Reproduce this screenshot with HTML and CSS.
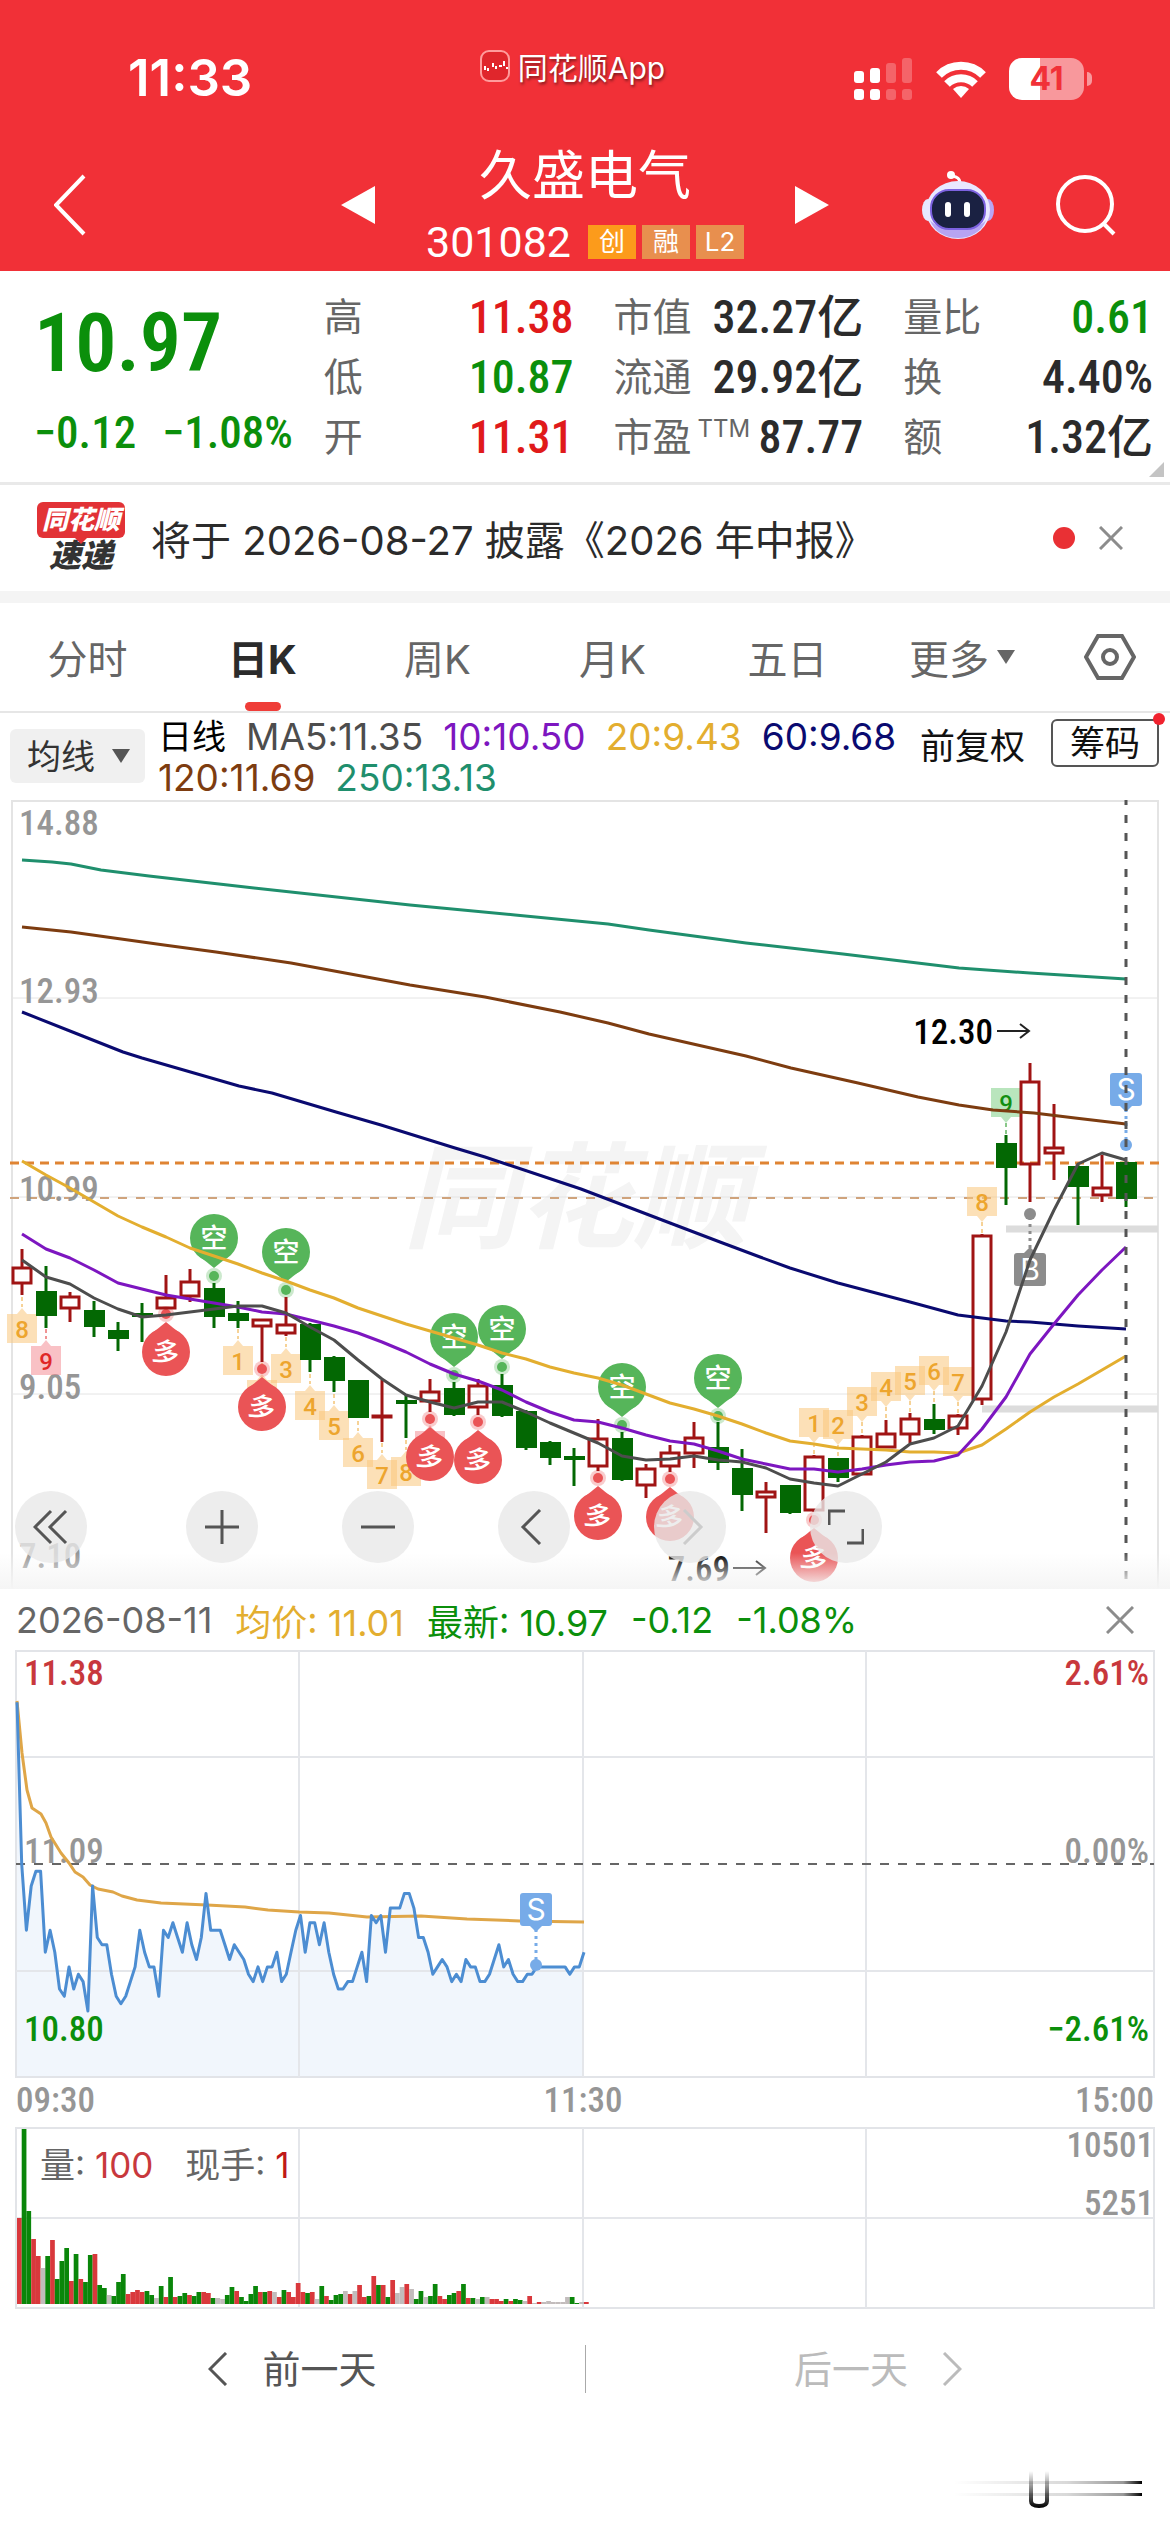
FILE: index.html
```
<!DOCTYPE html>
<html lang="zh-CN">
<head>
  <meta charset="UTF-8">
  <meta name="viewport" content="width=device-width, initial-scale=1.0">
  <title>久盛电气 301082</title>
  <link rel="stylesheet" href="styles.css">
</head>
<body>
  <header class="header">
    <div class="status-bar">
      <div class="time">11:33</div>
      <div class="app-name">
        <svg width="32" height="34" viewBox="0 0 32 34">
          <rect x="2" y="2" width="28" height="30" rx="8" fill="#e0262c" stroke="#ff9c9c" stroke-width="2"/>
          <path d="M6 21v-4M9 22v-3M14 18v-4M17 20v-3M20 17h3M25 17v-5M27 19h2" stroke="#fff" stroke-width="2" fill="none"/>
        </svg>
        <span>同花顺App</span>
      </div>
      <div class="status-icons">
        <svg width="59" height="42" viewBox="0 0 59 42" fill="#fff">
          <rect x="0" y="13" width="10" height="12" rx="3"/>
          <rect x="16" y="10" width="10" height="15" rx="3"/>
          <rect x="32" y="5" width="10" height="20" rx="3" opacity=".25"/>
          <rect x="48" y="0" width="10" height="25" rx="3" opacity=".25"/>
          <rect x="0" y="31" width="10" height="11" rx="3"/>
          <rect x="16" y="31" width="10" height="11" rx="3"/>
          <rect x="32" y="31" width="10" height="11" rx="3" opacity=".25"/>
          <rect x="48" y="31" width="10" height="11" rx="3" opacity=".25"/>
        </svg>
        <svg width="50" height="38" viewBox="0 0 50 38" fill="none" stroke="#fff" stroke-width="8">
          <path d="M3 15a31 31 0 0 1 44 0"/>
          <path d="M11 24a20 20 0 0 1 28 0"/>
          <path d="M25 38l-8-9a12 12 0 0 1 16 0z" fill="#fff" stroke="none"/>
        </svg>
        <div class="battery"><span>41</span></div>
      </div>
    </div>
    <nav class="title-bar">
      <button class="icon-btn" aria-label="返回">
        <svg width="32" height="62" viewBox="0 0 32 62" fill="none" stroke="#fff" stroke-width="4"><path d="M30 2L2 31l28 29"/></svg>
      </button>
      <div class="title-center">
        <button class="icon-btn" aria-label="上一只">
          <svg width="34" height="38" viewBox="0 0 34 38"><path d="M34 0v38L0 19z" fill="#fff"/></svg>
        </button>
        <div class="stock">
          <h1 class="stock-name">久盛电气</h1>
          <div class="stock-code">
            <span>301082</span>
            <span class="tags"><i class="tag tag-main">创</i><i class="tag">融</i><i class="tag">L2</i></span>
          </div>
        </div>
        <button class="icon-btn" aria-label="下一只">
          <svg width="34" height="38" viewBox="0 0 34 38"><path d="M0 0v38l34-19z" fill="#fff"/></svg>
        </button>
      </div>
      <div class="title-tools">
        <button class="icon-btn" aria-label="助手">
          <svg width="72" height="70" viewBox="0 0 72 70">
            <path d="M38 14c0-6-3-7-8-8" stroke="#fff" stroke-width="3" fill="none"/>
            <circle cx="29" cy="5" r="4" fill="#fff"/>
            <ellipse cx="6" cy="40" rx="6" ry="11" fill="#e6e9ff"/>
            <ellipse cx="66" cy="40" rx="6" ry="11" fill="#b9a6f5"/>
            <ellipse cx="36" cy="40" rx="32" ry="29" fill="#e9e8ff"/>
            <path d="M8 50c8 24 48 24 56 0-8 12-48 12-56 0z" fill="#b7a4f2"/>
            <rect x="9" y="20" width="54" height="39" rx="18" fill="#1a2142" stroke="#7c62e0" stroke-width="2"/>
            <rect x="23" y="32" width="6" height="15" rx="3" fill="#fff"/>
            <rect x="42" y="32" width="6" height="15" rx="3" fill="#fff"/>
          </svg>
        </button>
        <button class="icon-btn" aria-label="搜索">
          <svg width="60" height="62" viewBox="0 0 60 62" fill="none" stroke="#fff" stroke-width="4"><circle cx="29" cy="30" r="27"/><path d="M48 50l10 10"/></svg>
        </button>
      </div>
    </nav>
  </header>

  <section class="quote">
    <div class="price-box">
      <div class="price">10.97</div>
      <div class="change"><span>−0.12</span><span>−1.08%</span></div>
    </div>
    <div class="stats">
      <div class="stat"><span>高</span><b class="up">11.38</b></div>
      <div class="stat"><span>低</span><b class="down">10.87</b></div>
      <div class="stat"><span>开</span><b class="up">11.31</b></div>
    </div>
    <div class="stats">
      <div class="stat"><span>市值</span><b>32.27亿</b></div>
      <div class="stat"><span>流通</span><b>29.92亿</b></div>
      <div class="stat"><span>市盈<sup>TTM</sup></span><b>87.77</b></div>
    </div>
    <div class="stats">
      <div class="stat"><span>量比</span><b class="down">0.61</b></div>
      <div class="stat"><span>换</span><b>4.40%</b></div>
      <div class="stat"><span>额</span><b>1.32亿</b></div>
    </div>
  </section>

  <section class="news">
    <div class="news-logo">
      <span class="logo-top">同花顺</span>
      <span class="logo-bottom">速递</span>
    </div>
    <a class="news-text" href="#">将于 2026-08-27 披露《2026 年中报》</a>
    <span class="dot"></span>
    <button class="icon-btn" aria-label="关闭">
      <svg width="24" height="24" viewBox="0 0 24 24" stroke="#8c8c8c" stroke-width="3"><path d="M1 1l22 22M23 1L1 23"/></svg>
    </button>
  </section>

  <nav class="tabs">
    <button class="tab">分时</button>
    <button class="tab active">日K</button>
    <button class="tab">周K</button>
    <button class="tab">月K</button>
    <button class="tab">五日</button>
    <button class="tab">更多<svg width="20" height="14" viewBox="0 0 20 14"><path d="M1 0h18l-9 14z" fill="#666"/></svg></button>
    <button class="tab" aria-label="设置">
      <svg width="52" height="46" viewBox="0 0 52 46" fill="none" stroke="#666" stroke-width="4"><path d="M14 2h24l12 21-12 21H14L2 23z"/><circle cx="26" cy="23" r="7"/></svg>
    </button>
  </nav>

  <section class="ma-bar">
    <div class="select-box">
      <select class="ma-select" aria-label="指标"><option>均线</option></select>
      <svg width="20" height="14" viewBox="0 0 20 14"><path d="M1 0h18l-9 14z" fill="#555"/></svg>
    </div>
    <div class="ma-list">
      <span class="ma-name">日线</span>
      <span class="ma5">MA5:11.35</span>
      <span class="ma10">10:10.50</span>
      <span class="ma20">20:9.43</span>
      <span class="ma60">60:9.68</span>
      <span class="ma120">120:11.69</span>
      <span class="ma250">250:13.13</span>
    </div>
    <div class="ma-right">
      <span>前复权</span>
      <button class="chip-btn">筹码<i class="chip-dot"></i></button>
    </div>
  </section>

  <section class="kline">
    <svg id="kline" class="chart" viewBox="0 800 1170 789"></svg>
    <div class="kline-fade"></div>
    <div class="kline-tools">
      <button class="round-btn" aria-label="最早"><svg viewBox="0 0 36 36"><path d="M18 2L2 18l16 16M33 2L17 18l16 16"/></svg></button>
      <button class="round-btn" aria-label="放大"><svg viewBox="0 0 36 36"><path d="M18 1v34M1 18h34"/></svg></button>
      <button class="round-btn" aria-label="缩小"><svg viewBox="0 0 36 36"><path d="M1 18h34"/></svg></button>
      <button class="round-btn" aria-label="左移"><svg viewBox="0 0 36 36"><path d="M24 1L7 18l17 17"/></svg></button>
      <button class="round-btn" aria-label="右移" disabled><svg viewBox="0 0 36 36"><path d="M12 1l17 17-17 17"/></svg></button>
      <button class="round-btn" aria-label="全屏"><svg viewBox="0 0 36 36"><path d="M1 16V2h16M35 20v14H19"/></svg></button>
    </div>
  </section>

  <section class="intraday">
    <div class="intraday-head">
      <span class="date">2026-08-11</span>
      <span class="ma20">均价: 11.01</span>
      <span class="down">最新: 10.97</span>
      <span class="down">-0.12</span>
      <span class="down">-1.08%</span>
      <button class="icon-btn close" aria-label="关闭">
        <svg width="28" height="28" viewBox="0 0 28 28" stroke="#8c8c8c" stroke-width="3"><path d="M1 1l26 26M27 1L1 27"/></svg>
      </button>
    </div>
    <svg id="intraday" class="chart" viewBox="0 1650 1170 665"></svg>
  </section>

  <nav class="day-nav">
    <button class="day-btn">
      <svg width="20" height="34" viewBox="0 0 20 34" fill="none" stroke="#555" stroke-width="3"><path d="M18 1L2 17l16 16"/></svg>
      前一天
    </button>
    <button class="day-btn" disabled>
      后一天
      <svg width="20" height="34" viewBox="0 0 20 34" fill="none" stroke="#bbb" stroke-width="3"><path d="M2 1l16 16L2 33"/></svg>
    </button>
  </nav>

  <footer class="footer">
    <svg width="190" height="44" viewBox="0 0 190 44">
      <defs>
        <linearGradient id="fadeX"><stop offset="0" stop-color="#000" stop-opacity="0"/><stop offset=".6" stop-color="#000" stop-opacity=".15"/><stop offset=".9" stop-color="#000" stop-opacity=".4"/><stop offset="1" stop-color="#000"/></linearGradient>
        <linearGradient id="fadeY" x2="0" y2="1"><stop offset="0" stop-color="#000" stop-opacity="0"/><stop offset="1" stop-color="#000"/></linearGradient>
      </defs>
      <rect x="0" y="12" width="188" height="3" fill="url(#fadeX)"/>
      <rect x="0" y="24" width="188" height="3" fill="url(#fadeX)"/>
      <path d="M75 2v30q0 7 10 7t10-7V2h-4v30q0 3-6 3t-6-3V2z" fill="url(#fadeY)"/>
    </svg>
  </footer>

  <script src="main.js"></script>
</body>
</html>
```
FILE: styles.css
```
:root {
  --red: #e01a1a;
  --green: #0b8f0b;
  --num: "Roboto Condensed", Roboto, "Noto Sans CJK SC", sans-serif;
}
* {
  box-sizing: border-box;
}
body {
  margin: 0;
  background: #fff;
  color: #333;
  font-family: Inter, "Noto Sans CJK SC", sans-serif;
}
button, select {
  font: inherit;
  color: inherit;
  border: none;
  background: none;
  padding: 0;
  cursor: pointer;
}
svg {
  display: block;
}
.icon-btn {
  display: block;
}

/* header */
.header {
  background: #f13037;
  color: #fff;
}
.status-bar {
  display: grid;
  grid-template-columns: 1fr auto 1fr;
  height: 144px;
  padding: 0 86px;
}
.time {
  padding: 48px 0 0 42px;
  font-size: 51px;
  font-weight: 600;
  line-height: 60px;
}
.app-name {
  display: flex;
  align-items: center;
  gap: 7px;
  height: 44px;
  margin-top: 44px;
  padding-right: 26px;
  font-size: 30px;
  text-shadow: 1px 2px 3px rgba(0, 0, 0, 0.5);
}
.status-icons {
  display: flex;
  justify-content: flex-end;
  align-items: center;
  gap: 23px;
  height: 42px;
  margin-top: 58px;
}
.battery {
  position: relative;
  width: 75px;
  height: 42px;
  border-radius: 13px;
  background: linear-gradient(90deg, #fff 41%, #f8989c 41%);
  color: #f13037;
  font-size: 32px;
  font-weight: 700;
  line-height: 42px;
  text-align: center;
}
.battery::after {
  content: "";
  position: absolute;
  right: -8px;
  top: 14px;
  width: 5px;
  height: 14px;
  border-radius: 0 5px 5px 0;
  background: #f8989c;
}
.title-bar {
  display: grid;
  grid-template-columns: 1fr auto 1fr;
  align-items: center;
  padding: 4px 54px 9px;
}
.title-center {
  display: flex;
  align-items: center;
  gap: 51px;
}
.stock {
  text-align: center;
}
.stock-name {
  margin: 0 0 18px;
  font-size: 53px;
  font-weight: 400;
  line-height: 56px;
}
.stock-code {
  display: flex;
  align-items: center;
  gap: 17px;
  font-family: Roboto, sans-serif;
  font-size: 43px;
  line-height: 40px;
}
.tags {
  display: flex;
  gap: 6px;
}
.tag {
  width: 48px;
  height: 34px;
  background: #e88f4e;
  font-family: Inter, "Noto Sans CJK SC", sans-serif;
  font-size: 26px;
  font-style: normal;
  line-height: 34px;
}
.tag-main {
  background: #fc9b1b;
}
.title-tools {
  display: flex;
  align-items: center;
  justify-content: flex-end;
  gap: 62px;
}

/* quote */
.quote {
  position: relative;
  display: grid;
  grid-template-columns: repeat(4, minmax(0, 1fr));
  gap: 40px;
  padding: 16px 17px 15px 34px;
  border-bottom: 3px solid #e9e9e9;
  white-space: nowrap;
}
.quote::after {
  content: "";
  position: absolute;
  right: 6px;
  bottom: 5px;
  border-left: 15px solid transparent;
  border-bottom: 15px solid #c4c4c4;
}
.price-box {
  font-family: var(--num);
  color: var(--green);
}
.price {
  font-size: 82px;
  font-weight: 600;
  line-height: 112px;
}
.change {
  display: flex;
  gap: 26px;
  margin-top: 4px;
  font-size: 45px;
  font-weight: 500;
  line-height: 60px;
}
.stat {
  display: flex;
  justify-content: space-between;
  color: #666;
  font-size: 39px;
  line-height: 60px;
  height: 60px;
}
.stat b {
  color: #2b2b2b;
  font-family: var(--num);
  font-size: 46px;
  font-weight: 500;
}
.stat sup {
  margin-left: 6px;
  font-size: 24px;
  line-height: 1px;
}
.up, .stat b.up {
  color: var(--red);
}
.down, .stat b.down {
  color: var(--green);
}

/* news */
.news {
  display: flex;
  align-items: center;
  height: 118px;
  padding: 0 47px 0 37px;
  border-bottom: 12px solid #f4f4f4;
}
.news-logo {
  display: flex;
  flex-direction: column;
  align-items: center;
  width: 88px;
  margin-right: 26px;
  font-style: italic;
  font-weight: 900;
  line-height: 36px;
}
.logo-top {
  position: relative;
  width: 88px;
  border-radius: 6px;
  background: #e23236;
  color: #fff;
  font-size: 26px;
  text-align: center;
}
.logo-top::after {
  content: "";
  position: absolute;
  left: 38px;
  top: 100%;
  border: 6px solid transparent;
  border-top-color: #e23236;
  border-bottom: none;
}
.logo-bottom {
  font-size: 32px;
}
.news-text {
  flex: 1;
  color: #2b2b2b;
  font-size: 40px;
  text-decoration: none;
}
.dot {
  width: 22px;
  height: 22px;
  margin-right: 24px;
  border-radius: 50%;
  background: #e93034;
}

/* tabs */
.tabs {
  display: grid;
  grid-template-columns: repeat(6, 175fr) 120fr;
  height: 110px;
  border-bottom: 2px solid #e6e6e6;
}
.tab {
  position: relative;
  display: flex;
  align-items: center;
  justify-content: center;
  gap: 7px;
  color: #666;
  font-size: 40px;
}
.tab.active {
  color: #2b2b2b;
  font-weight: 700;
}
.tab.active::after {
  content: "";
  position: absolute;
  bottom: 0;
  width: 36px;
  height: 9px;
  border-radius: 5px;
  background: #ef3d38;
}

/* moving averages */
.ma-bar {
  display: flex;
  height: 87px;
  padding: 0 11px 0 10px;
  font-size: 35px;
  white-space: nowrap;
}
.select-box {
  display: flex;
  align-items: center;
  gap: 16px;
  height: 54px;
  margin: 16px 13px 0 0;
  padding: 0 14px 0 17px;
  border-radius: 6px;
  background: #f0f0f0;
  font-size: 34px;
}
.ma-select {
  appearance: none;
}
.ma-list {
  flex: 1;
  display: flex;
  flex-wrap: wrap;
  align-content: flex-start;
  column-gap: 20px;
  padding-top: 3px;
  font-size: 37px;
  line-height: 41px;
}
.ma-name {
  color: #000;
  font-size: 34px;
}
.ma-right {
  display: flex;
  align-items: center;
  gap: 26px;
  height: 48px;
  margin-top: 6px;
  color: #111;
}
.chip-btn {
  position: relative;
  height: 48px;
  padding: 0 17px;
  border: 2px solid #555;
  border-radius: 6px;
  line-height: 42px;
}
.chip-dot {
  position: absolute;
  top: -8px;
  right: -8px;
  width: 12px;
  height: 12px;
  border-radius: 50%;
  background: #f0222e;
}
.ma5 { color: #4d4d4d; }
.ma10 { color: #7d16c0; }
.ma20 { color: #e3ae2f; }
.ma60 { color: #0a0a70; }
.ma120 { color: #7d3c10; }
.ma250 { color: #1f8f6d; }

/* charts */
.chart {
  width: 100%;
  height: auto;
}
.chart text {
  font-family: var(--num);
  font-size: 35px;
}
.chart .sans {
  font-family: Inter, "Noto Sans CJK SC", sans-serif;
}
.chart .axis {
  fill: #969696;
}
.chart .strong {
  font-weight: 500;
}
.chart .watermark {
  fill: #f4f4f4;
  font-family: "Noto Sans CJK SC", sans-serif;
  font-size: 115px;
  font-style: italic;
  font-weight: 700;
}
.chart .badge-text {
  font-family: Roboto, sans-serif;
  font-size: 24px;
  font-weight: 500;
}
.chart .pin-text {
  font-family: "Noto Sans CJK SC", sans-serif;
  font-size: 27px;
  font-weight: 500;
}
.chart .mark-text {
  font-family: Inter, sans-serif;
  font-size: 30px;
}
.kline {
  position: relative;
}
.kline-fade {
  position: absolute;
  left: 0;
  right: 0;
  bottom: 0;
  height: 36px;
  background: linear-gradient(rgba(245, 245, 245, 0), #f5f5f5);
}
.kline-tools {
  position: absolute;
  left: 15px;
  bottom: 26px;
  display: flex;
  gap: 84px;
}
.round-btn {
  width: 72px;
  height: 72px;
  padding: 18px;
  border-radius: 50%;
  background: rgba(232, 232, 232, 0.8);
}
.round-btn:first-child {
  margin-right: 15px;
}
.round-btn svg {
  fill: none;
  stroke: #555;
  stroke-width: 3;
}
.round-btn:disabled svg {
  stroke: #ccc;
}
.intraday-head {
  display: flex;
  align-items: center;
  gap: 23px;
  height: 61px;
  padding: 0 36px 0 16px;
  font-size: 36px;
}
.date {
  color: #666;
}
.close {
  margin-left: auto;
}

/* prev / next day */
.day-nav {
  display: grid;
  grid-template-columns: 1fr 1fr;
  padding: 30px 0 32px;
}
.day-btn {
  display: flex;
  align-items: center;
  justify-content: center;
  gap: 34px;
  height: 48px;
  color: #555;
  font-size: 38px;
  line-height: 48px;
}
.day-btn:disabled {
  border-left: 1px solid #aaa;
  color: #bbb;
}
.footer {
  display: flex;
  justify-content: flex-end;
  padding: 44px 26px 0 0;
}
```
FILE: main.js
```
var NS = 'http://www.w3.org/2000/svg';

function add(parent, tag, attrs, text) {
  var el = document.createElementNS(NS, tag);
  for (var k in attrs) el.setAttribute(k, attrs[k]);
  if (text !== undefined) el.textContent = text;
  parent.appendChild(el);
  return el;
}

function line(svg, x1, y1, x2, y2, color, w, dash) {
  var attrs = { x1: x1, y1: y1, x2: x2, y2: y2, stroke: color, 'stroke-width': w };
  if (dash) attrs['stroke-dasharray'] = dash;
  return add(svg, 'line', attrs);
}

function poly(svg, pts, color, w) {
  add(svg, 'polyline', { points: pts.join(' '), fill: 'none', stroke: color, 'stroke-width': w, 'stroke-linejoin': 'round' });
}

// ---------- daily K line ----------
var k = document.getElementById('kline');
var STEP = 24;
function kx(i) { return 22 + STEP * i; }

// [up, high, bodyTop, bodyBottom, low]
var candles = [
  [1,1249,1267,1284,1295],[0,1266,1291,1316,1328],[1,1292,1296,1309,1322],[0,1301,1310,1327,1337],
  [0,1322,1330,1339,1351],[0,1303,1313,1317,1342],[1,1275,1297,1309,1309],[1,1269,1281,1297,1302],
  [0,1283,1288,1317,1328],[0,1301,1313,1321,1328],[1,1319,1319,1327,1362],[1,1297,1324,1334,1336],
  [0,1323,1324,1360,1372],[0,1356,1357,1381,1392],[0,1380,1380,1418,1418],[1,1380,1415,1417,1442],
  [0,1395,1400,1404,1438],[1,1379,1391,1402,1412],[0,1382,1388,1415,1416],[1,1379,1385,1408,1415],
  [0,1374,1385,1416,1417],[0,1410,1411,1448,1450],[0,1441,1442,1458,1465],[0,1448,1456,1460,1486],
  [1,1419,1438,1467,1471],[0,1432,1438,1480,1481],[1,1464,1468,1486,1498],[1,1445,1452,1467,1472],
  [1,1422,1437,1454,1468],[0,1422,1447,1463,1470],[0,1449,1468,1495,1511],[1,1482,1491,1498,1533],
  [0,1485,1485,1513,1514],[1,1455,1456,1511,1512],[0,1458,1458,1478,1482],[1,1435,1436,1475,1475],
  [1,1420,1433,1448,1448],[1,1413,1418,1435,1443],[0,1404,1419,1430,1434],[1,1414,1415,1429,1435],
  [1,1234,1235,1400,1405],[0,1135,1143,1168,1205],[1,1063,1081,1165,1202],[1,1104,1147,1154,1180],
  [0,1165,1166,1187,1225],[1,1155,1187,1196,1202],[0,1162,1162,1199,1207]
];
var ma5 = [1260,1277,1284,1298,1309,1317,1315,1312,1309,1306,1306,1313,1327,1340,1360,1379,1395,1402,1408,1402,1402,1412,1423,1433,1443,1456,1460,1459,1456,1460,1462,1468,1479,1483,1486,1474,1462,1444,1438,1426,1386,1332,1260,1210,1164,1153,1160];
var ma10 = [1234,1249,1258,1270,1283,1289,1295,1299,1303,1307,1312,1314,1320,1326,1333,1342,1352,1364,1374,1381,1390,1402,1412,1420,1422,1428,1435,1441,1444,1451,1459,1464,1469,1469,1472,1469,1465,1462,1461,1455,1429,1397,1354,1324,1295,1270,1247];
var ma20 = [1161,1175,1188,1202,1216,1227,1237,1248,1256,1264,1273,1281,1290,1298,1308,1316,1324,1331,1338,1345,1353,1359,1367,1373,1378,1385,1394,1403,1409,1416,1424,1433,1441,1444,1448,1449,1450,1452,1452,1453,1445,1429,1412,1397,1384,1370,1356];
var ma60 = ['22,1012','75,1033','123,1052','142,1058','239,1086','272,1093','336,1112','381,1125','455,1148','485,1157','581,1189','670,1223','720,1242','760,1257','790,1268','838,1283','910,1302','958,1315','982,1318','1006,1321','1030,1322','1078,1326','1126,1329'];
var ma120 = ['22,927','71,932','164,945','216,952','291,963','410,985','485,997','560,1012','608,1023','649,1034','746,1056','791,1068','858,1083','918,1097','959,1105','993,1110','1034,1113','1075,1118','1126,1124'];
var ma250 = ['22,860','52,862','71,864','101,870','149,876','254,888','410,905','515,915','608,924','649,930','746,943','843,954','959,968','1030,973','1126,979'];

add(k, 'text', { x: 403, y: 1239, 'class': 'watermark' }, '同花顺');
add(k, 'path', { d: 'M12 1589V801H1158V1589', fill: 'none', stroke: '#e4e4e4', 'stroke-width': 2 });
[998, 1197, 1394].forEach(function (y) { line(k, 12, y, 1158, y, '#e4e4e4', 1); });
line(k, 1006, 1229, 1158, 1229, '#dcdcdc', 7);
line(k, 982, 1409, 1158, 1409, '#dcdcdc', 7);
line(k, 10, 1163, 1160, 1163, '#df8433', 3, '9 6');
line(k, 10, 1198, 1160, 1198, '#cfa37c', 2, '9 9');

[['14.88', 835], ['12.93', 1003], ['10.99', 1201], ['9.05', 1399], ['7.10', 1568]].forEach(function (a) {
  add(k, 'text', { x: 19, y: a[1], 'class': 'axis strong' }, a[0]);
});

// nine-turn badges: [index, top, digit, colour], pointing up at the candle
var O = ['#fac67c', '#eda52e'], R = ['#f48e96', '#e02828'], G = ['#7fcf86', '#128f12'];
function badge(i, top, n, c, below) {
  var x = kx(i), y = top;
  var d = below
    ? 'M' + (x - 15) + ' ' + y + 'h10l5 -6l5 6h10v29h-30z'
    : 'M' + (x - 15) + ' ' + y + 'h30v29h-10l-5 6l-5 -6h-10z';
  add(k, 'path', { d: d, fill: c[0], opacity: 0.55 });
  if (below) line(k, x, y - 17, x, y - 7, c[1], 1, '4 3');
  else line(k, x, y + 35, x, y + 46, c[1], 1, '4 3');
  add(k, 'text', { x: x, y: y + 24, 'text-anchor': 'middle', fill: c[1], 'class': 'badge-text' }, n);
}
[[0,1314,8,O],[1,1346,9,R],[9,1346,1,O],[10,1380,2,O],[11,1354,3,O],[12,1391,4,O],[13,1411,5,O],[14,1438,6,O],[15,1460,7,O],[16,1457,8,O],[17,1431,9,R]]
  .forEach(function (b) { badge(b[0], b[1], b[2], b[3], true); });
[[33,1408,1,O],[34,1410,2,O],[35,1387,3,O],[36,1372,4,O],[37,1366,5,O],[38,1356,6,O],[39,1367,7,O],[40,1187,8,O],[41,1088,9,G]]
  .forEach(function (b) { badge(b[0], b[1], b[2], b[3], false); });

// long / short pins
function pin(i, cy, up) {
  var x = kx(i), c = up ? '#56b55a' : '#ea5456', s = up ? 1 : -1;
  add(k, 'circle', { cx: x, cy: cy, r: 24, fill: c });
  add(k, 'path', { d: 'M' + (x - 16) + ' ' + (cy + 17 * s) + 'L' + x + ' ' + (cy + 30 * s) + 'L' + (x + 16) + ' ' + (cy + 17 * s) + 'z', fill: c });
  add(k, 'circle', { cx: x, cy: cy + 38 * s, r: 8, fill: c, opacity: 0.3 });
  add(k, 'circle', { cx: x, cy: cy + 38 * s, r: 5, fill: c });
  var t = { x: x, y: cy + 10, 'text-anchor': 'middle', fill: '#fff', 'class': 'pin-text' };
  if (!up) t.transform = 'rotate(12 ' + x + ' ' + cy + ')';
  add(k, 'text', t, up ? '空' : '多');
}
[[8,1238],[11,1252],[18,1337],[20,1329],[25,1387],[29,1378]].forEach(function (p) { pin(p[0], p[1], true); });
[[6,1352],[10,1407],[17,1457],[19,1460],[24,1516],[27,1517],[33,1558]].forEach(function (p) { pin(p[0], p[1], false); });

// trade marks
function mark(svg, x, y, letter, c, dotY) {
  var down = dotY > y;
  line(svg, x, down ? y + 36 : y - 5, x, dotY, c, 3, '3 4');
  add(svg, 'rect', { x: x - 16, y: y, width: 32, height: 33, rx: 3, fill: c });
  add(svg, 'path', { d: down ? 'M' + (x - 6) + ' ' + (y + 33) + 'h12l-6 6z' : 'M' + (x - 6) + ' ' + y + 'h12l-6 -6z', fill: c });
  add(svg, 'circle', { cx: x, cy: dotY, r: 6, fill: c });
  add(svg, 'text', { x: x, y: y + 27, 'text-anchor': 'middle', fill: '#fff', 'class': 'mark-text' }, letter);
}
mark(k, kx(42), 1253, 'B', '#8c8c8c', 1214);
mark(k, 1126, 1073, 'S', '#77abe8', 1145);

candles.forEach(function (c, i) {
  var x = kx(i), col = c[0] ? '#a01414' : '#036803';
  if (c[0]) {
    line(k, x, c[1], x, c[2], col, 3);
    line(k, x, c[3], x, c[4], col, 3);
    add(k, 'rect', { x: x - 9, y: c[2] + 1, width: 18, height: Math.max(1, c[3] - c[2] - 2), fill: 'none', stroke: col, 'stroke-width': 3 });
  } else {
    line(k, x, c[1], x, c[4], col, 3);
    add(k, 'rect', { x: x - 10, y: c[2], width: 21, height: c[3] - c[2], fill: col });
  }
});

function byIndex(arr) { return arr.map(function (y, i) { return kx(i) + ',' + y; }); }
poly(k, ma250, '#1f8f6d', 3);
poly(k, ma120, '#7d3c10', 3);
poly(k, ma60, '#0a0a70', 3);
poly(k, byIndex(ma20), '#e3ae2f', 3);
poly(k, byIndex(ma10), '#7d16c0', 3);
poly(k, byIndex(ma5), '#4d4d4d', 3);
line(k, 1126, 797, 1126, 1583, '#555', 3, '8 10');

function arrow(x, y) {
  add(k, 'path', { d: 'M' + x + ' ' + y + 'h32m-9 -7l9 7l-9 7', fill: 'none', stroke: '#222', 'stroke-width': 2 });
}
add(k, 'text', { x: 993, y: 1044, 'text-anchor': 'end', 'class': 'strong' }, '12.30');
arrow(997, 1031);
add(k, 'text', { x: 730, y: 1581, 'text-anchor': 'end', 'class': 'strong' }, '7.69');
arrow(733, 1568);

// ---------- intraday ----------
var t = document.getElementById('intraday');
var MIN = 567 / 120;
function tx(i) { return 17 + MIN * i; }

// minute price, in cents above or below the previous close 11.09
var ticks = [22,0,-9,-3,-1,-1,-12,-9,-12,-17,-18,-14,-17,-15,-16,-20,-3,-10,-11,-11,-15,-18,-19,-18,-16,-14,-9,-12,-14,-14,-18,-9,-10,-8,-10,-12,-8,-11,-13,-10,-4,-9,-9,-9,-11,-13,-11,-12,-13,-15,-16,-14,-16,-14,-14,-12,-16,-15,-12,-9,-7,-12,-8,-8,-11,-8,-12,-15,-17,-17,-16,-16,-14,-12,-16,-7,-8,-7,-12,-6,-6,-6,-4,-4,-6,-10,-10,-12,-15,-14,-13,-14,-16,-15,-16,-13,-14,-14,-16,-16,-15,-13,-11,-14,-13,-15,-16,-16,-15,-15,-14,-14,-14,-14,-14,-14,-14,-15,-14,-14,-12];
var pricePts = ticks.map(function (v, i) { return tx(i).toFixed(1) + ',' + (1864 - v * 7.35).toFixed(1); });
var avgPts = ['17,1701','22,1753','27,1790','32,1808','41,1814','46,1823','51,1837','61,1853','69,1863','75,1872','83,1877','90,1885','98,1889','113,1892','122,1896','137,1900','161,1903','207,1905','245,1907','268,1910','299,1912','329,1913','367,1917','421,1916','467,1919','520,1921','584,1922'];

add(t, 'polygon', { points: '17,2077 ' + pricePts.join(' ') + ' 583,2077', fill: '#f1f6fc' });
add(t, 'rect', { x: 16, y: 1651, width: 1138, height: 426, fill: 'none', stroke: '#e2e4e8', 'stroke-width': 2 });
add(t, 'rect', { x: 16, y: 2128, width: 1138, height: 180, fill: 'none', stroke: '#e2e4e8', 'stroke-width': 2 });
[299, 583, 866].forEach(function (x) {
  line(t, x, 1651, x, 2077, '#e4e6ea', 2);
  line(t, x, 2128, x, 2308, '#e4e6ea', 2);
});
[1757, 1971, 2218].forEach(function (y) { line(t, 16, y, 1154, y, '#e4e6ea', 2); });
line(t, 16, 1864, 1154, 1864, '#666', 2, '9 9');

function label(x, y, s, fill, anchor) {
  add(t, 'text', { x: x, y: y, fill: fill, 'text-anchor': anchor || 'start', 'class': 'strong' }, s);
}
var GRAY = '#969696', RED = '#c8383c', GREEN = '#0b8f0b';
label(24, 1685, '11.38', RED);
label(24, 1863, '11.09', GRAY);
label(24, 2041, '10.80', GREEN);
label(1149, 1685, '2.61%', RED, 'end');
label(1149, 1863, '0.00%', GRAY, 'end');
label(1149, 2041, '−2.61%', GREEN, 'end');
label(16, 2112, '09:30', GRAY);
label(583, 2112, '11:30', GRAY, 'middle');
label(1154, 2112, '15:00', GRAY, 'end');

poly(t, avgPts, '#dfa648', 3);
poly(t, pricePts, '#4c8dd2', 3);
mark(t, 536, 1893, 'S', '#77abe8', 1965);

// volume bars
var vol = 'r86 g175 g93 r65 r48 n36 g48 r64 g25 g43 g56 r23 g50 r25 g22 g49 r50 g19 g16 n9 g8 g22 g30 r10 r12 r14 r12 g13 g9 n6 g18 r7 g27 r7 g8 g11 r9 g8 g12 r12 r11 g6 n6 n5 g9 g17 r13 g7 g3 g10 g18 r12 g12 r13 n12 r7 g14 r12 r7 r21 r12 g11 r12 n5 g18 r8 g4 g9 g10 n13 r10 n13 r19 r7 g8 r28 g19 r19 g7 r24 n11 n17 r20 n15 g5 g13 n7 g8 g20 r8 r5 g9 g11 r13 g20 r6 g6 n5 g7 n7 r5 r5 r3 g5 r3 g5 g4 n3 r8 n1 r2 n2 n3 n2 n2 n2 n7 g7 g1 n2 r2'.split(' ');
var volColor = { r: '#d9383c', g: '#0a860a', n: '#c2bcbc' };
vol.forEach(function (v, i) {
  var h = +v.slice(1);
  add(t, 'rect', { x: tx(i).toFixed(1), y: 2304 - h, width: MIN, height: h, fill: volColor[v[0]] });
});
var info = add(t, 'text', { x: 40, y: 2178, 'class': 'sans', fill: '#666' });
add(info, 'tspan', {}, '量: ');
add(info, 'tspan', { fill: RED }, '100');
add(info, 'tspan', { dx: 32 }, '现手: ');
add(info, 'tspan', { fill: '#c01818' }, '1');
label(1154, 2157, '10501', GRAY, 'end');
label(1154, 2215, '5251', GRAY, 'end');
```
